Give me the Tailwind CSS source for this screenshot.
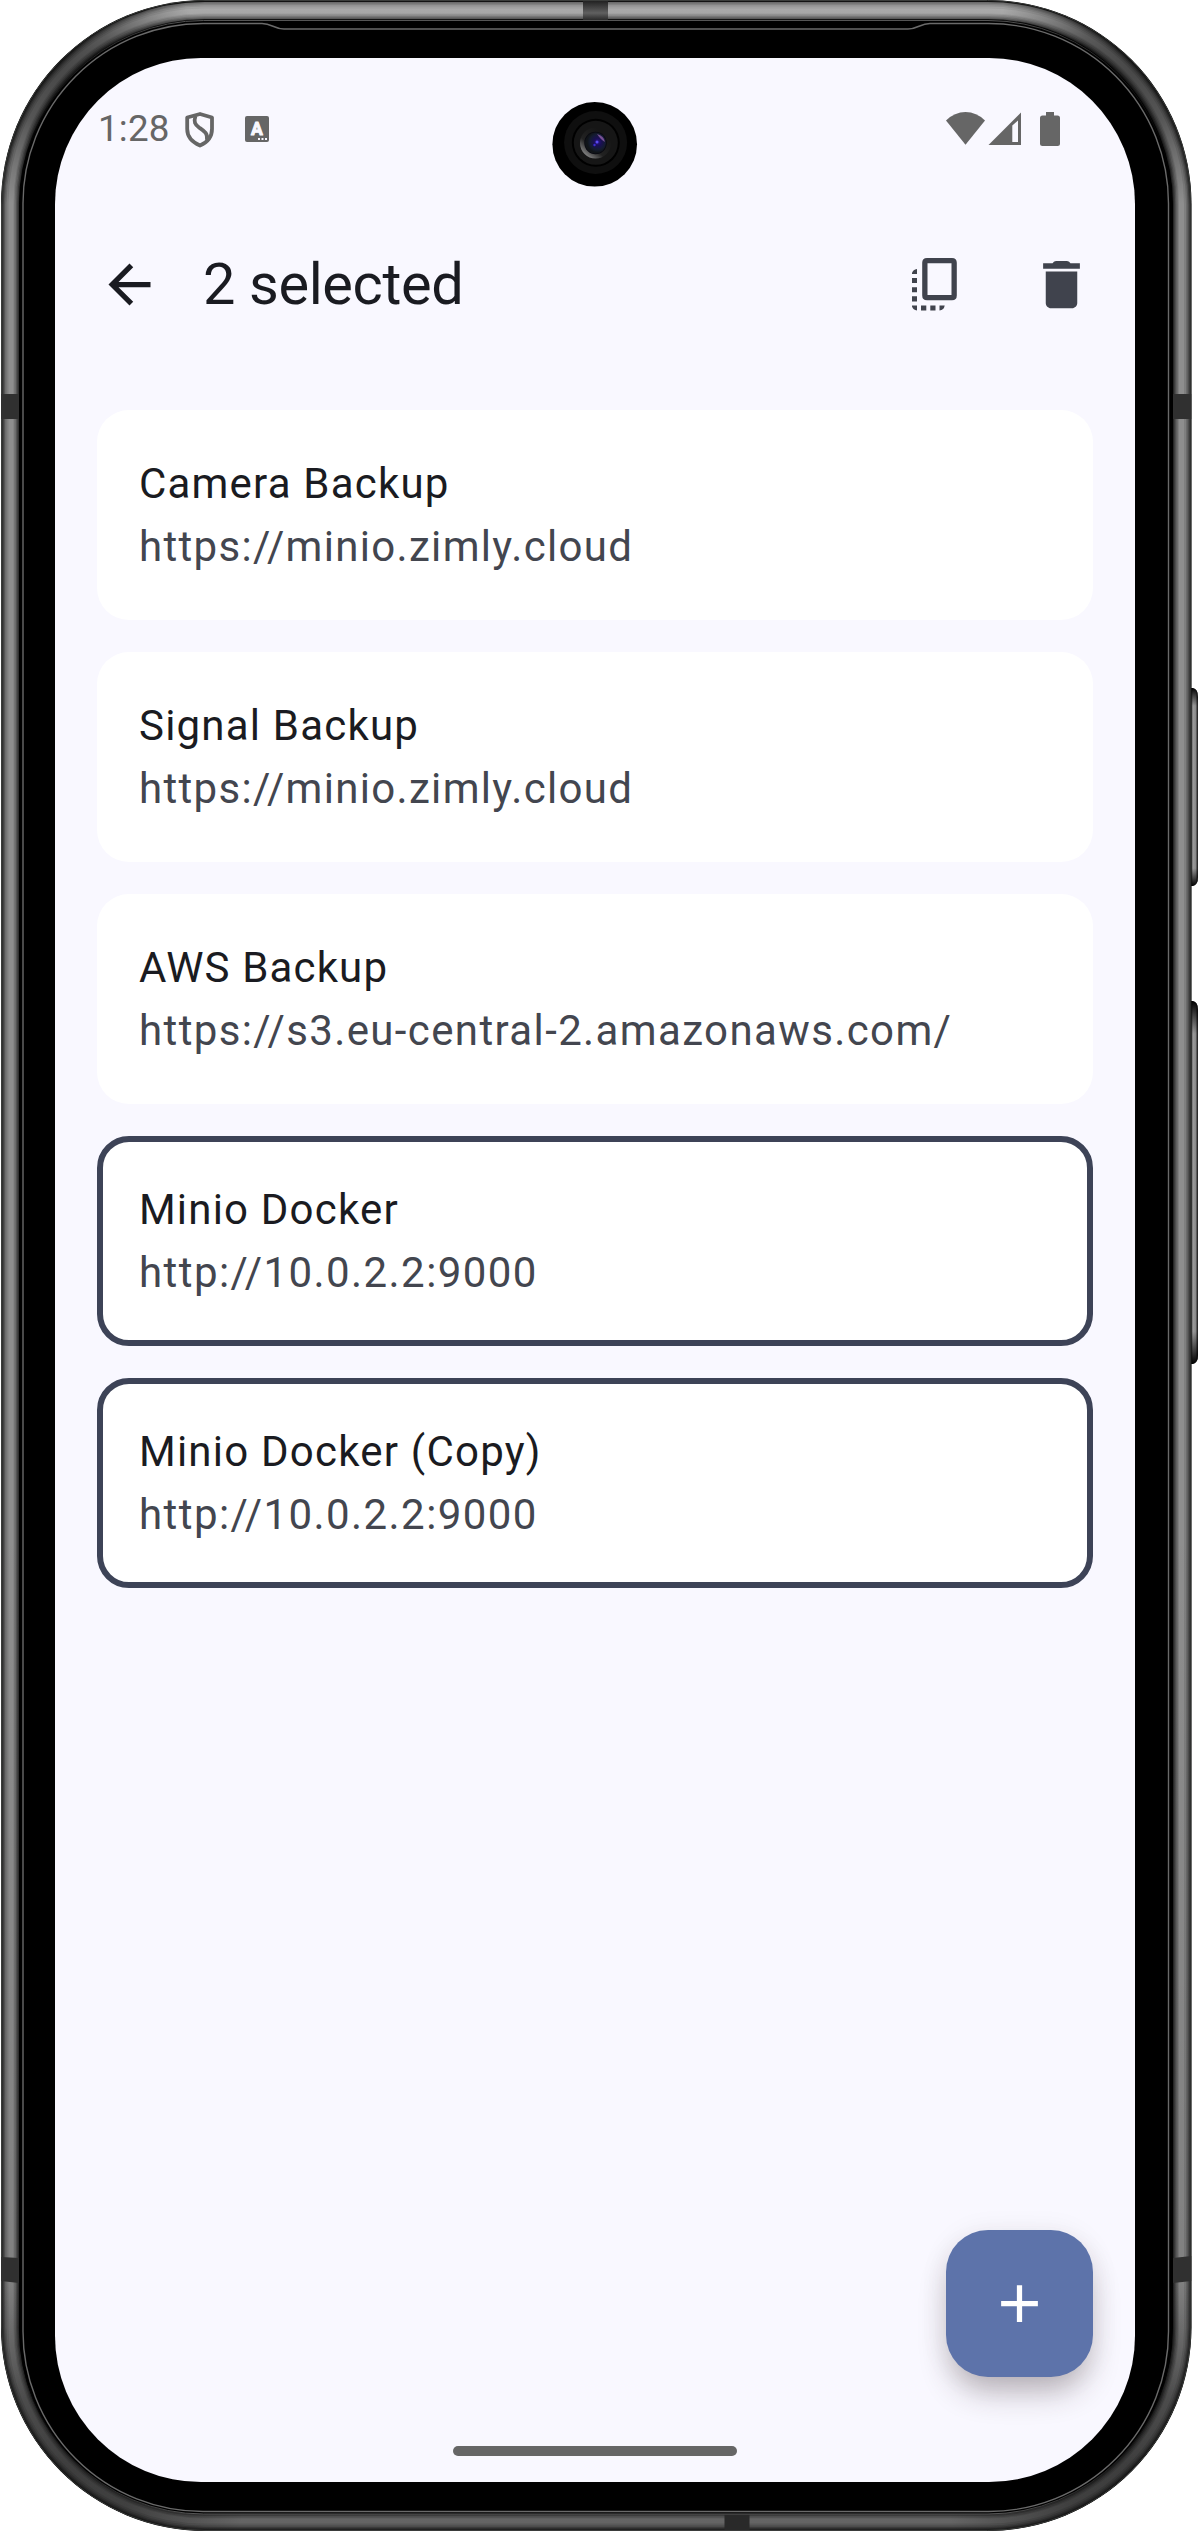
<!DOCTYPE html>
<html lang="en">
<head>
<meta charset="utf-8">
<title>2 selected</title>
<script src="https://cdn.jsdelivr.net/npm/@tailwindcss/browser@4"></script>
</head>
<body class="bg-white">
<div class="relative h-[2531px] w-[1198px] overflow-hidden pl-[55px] pt-[58px] font-['Roboto',sans-serif]">

  <!-- phone body -->
  <svg class="absolute left-0 top-0" width="1198" height="2531" viewBox="0 0 1198 2531" fill="none">
    <defs>
      <linearGradient id="light" x1="0" y1="0" x2="0" y2="2531" gradientUnits="userSpaceOnUse">
        <stop offset="0" stop-color="#fff" stop-opacity=".3"/>
        <stop offset=".02" stop-color="#fff" stop-opacity="0"/>
        <stop offset=".6" stop-color="#000" stop-opacity="0"/>
        <stop offset=".97" stop-color="#000" stop-opacity=".12"/>
        <stop offset="1" stop-color="#000" stop-opacity=".32"/>
      </linearGradient>
      <radialGradient id="shade">
        <stop offset="0" stop-color="#000" stop-opacity=".5"/>
        <stop offset=".4" stop-color="#000" stop-opacity=".4"/>
        <stop offset="1" stop-color="#000" stop-opacity="0"/>
      </radialGradient>
      <linearGradient id="seam" x1="20" y1="0" x2="1172" y2="0" gradientUnits="userSpaceOnUse">
        <stop offset="0" stop-color="#000"/><stop offset=".15" stop-color="#555"/><stop offset=".85" stop-color="#555"/><stop offset="1" stop-color="#000"/>
      </linearGradient>
      <linearGradient id="button" x1="1191" y1="0" x2="1198" y2="0" gradientUnits="userSpaceOnUse">
        <stop offset="0" stop-color="#555"/><stop offset=".35" stop-color="#999"/><stop offset=".65" stop-color="#8a8a8a"/><stop offset="1" stop-color="#111"/>
      </linearGradient>
      <linearGradient id="buttonEnds" x1="0" y1="0" x2="0" y2="1">
        <stop offset="0" stop-color="#000"/><stop offset=".09" stop-color="#000" stop-opacity="0"/><stop offset=".91" stop-color="#000" stop-opacity="0"/><stop offset="1" stop-color="#000"/>
      </linearGradient>
      <linearGradient id="bandTop" x1="0" y1="0" x2="0" y2="1"><stop offset="0" stop-color="#222"/><stop offset=".6" stop-color="#606060"/><stop offset="1" stop-color="#222"/></linearGradient>
      <clipPath id="body"><rect x="1" y="0" width="1190.5" height="2531" rx="204"/></clipPath>
      <radialGradient id="lens" cx=".6" cy=".45"><stop offset="0" stop-color="#2c1690"/><stop offset=".35" stop-color="#1a0f55"/><stop offset=".75" stop-color="#141c30"/><stop offset="1" stop-color="#101418"/></radialGradient>
      <linearGradient id="rim" x1=".15" y1=".9" x2=".75" y2=".2"><stop offset="0" stop-color="#888"/><stop offset=".4" stop-color="#222"/><stop offset="1" stop-color="#161616"/></linearGradient>
    </defs>
    <path d="M1191 688h2q5 1 5 9v180q0 8-5 9h-2zM1191 1001h2q5 1 5 9v345q0 8-5 9h-2z" fill="url(#button)"/>
    <path d="M1191 688h2q5 1 5 9v180q0 8-5 9h-2z" fill="url(#buttonEnds)"/>
    <path d="M1191 1001h2q5 1 5 9v345q0 8-5 9h-2z" fill="url(#buttonEnds)"/>
    <rect x="1" y="0" width="1190.5" height="2531" rx="204" fill="#000"/>
    <g clip-path="url(#body)">
      <rect x="10.5" y="10.5" width="1171.5" height="2511" rx="194" stroke="#262626" stroke-width="18"/>
      <rect x="10.5" y="10.5" width="1171.5" height="2511" rx="194" stroke="#3c3c3c" stroke-width="16"/>
      <rect x="10.5" y="10.5" width="1171.5" height="2511" rx="194" stroke="#555" stroke-width="13.5"/>
      <rect x="10.5" y="10.5" width="1171.5" height="2511" rx="194" stroke="#6c6c6c" stroke-width="11"/>
      <rect x="10.5" y="10.5" width="1171.5" height="2511" rx="194" stroke="#7f7f7f" stroke-width="8"/>
      <rect x="11" y="11" width="1170.5" height="2510" rx="193" stroke="#8e8e8e" stroke-width="5"/>
      <rect x="10.5" y="10.5" width="1171.5" height="2511" rx="194" stroke="url(#light)" stroke-width="17"/>
      <circle cx="55" cy="65" r="145" fill="url(#shade)"/>
      <circle cx="1137" cy="65" r="145" fill="url(#shade)"/>
      <circle cx="60" cy="2466" r="190" fill="url(#shade)"/>
      <circle cx="1132" cy="2466" r="190" fill="url(#shade)"/>
      <rect x="1.5" y=".5" width="1189.5" height="2530" rx="203.5" stroke="#3b3d3b"/>
      <path d="M1 394h18v25H1zM1173 394h18.500v25H1173zM1 2257l18 1v25l-18-2zM1173 2258l18.500-2v25l-18.500 2z" fill="#303030"/>
      <rect x="583" y="1" width="25" height="20" fill="url(#bandTop)"/>
      <rect x="724.500" y="2514" width="25" height="16" fill="#292929"/>
    </g>
    <rect x="19.500" y="20.500" width="1152.500" height="2493.500" rx="184" fill="#000" stroke="url(#seam)"/>
    <path d="M203 23.500H262C272 23.500 274 29 284 29H908C918 29 920 23.500 930 23.500H988.500A180 180 0 0 1 1168.500 203.500V2331.500A180 180 0 0 1 988.500 2511.500H203A180 180 0 0 1 23 2331.500V203.500A180 180 0 0 1 203 23.500Z" fill="#000" stroke="#6a6a6a" stroke-width="1.400"/>
  </svg>

  <!-- screen -->
  <div class="relative flex h-[2424px] w-[1080px] flex-col overflow-hidden rounded-[146px] bg-[#f9f8ff]">
    <div class="flex h-[142px] shrink-0 items-start justify-between pl-[43px] pr-[75px] pt-[52px]">
      <div class="flex items-start text-[#666]">
        <span class="w-[84px] text-[36.750px] leading-[37px] tracking-[0.2px]">1:28</span>
        <svg class="ml-[2px] mt-[2px]" width="30" height="36" viewBox="0 0 30 36" fill="none" stroke="#666" stroke-width="3.800" stroke-linejoin="round">
          <path d="M16 2 28 5.500V17C28 25 23 30.500 16 33.500 9 30.500 3.200 25 3.200 17V5.500Z"/>
          <path d="M11.500 4C9.500 10 11 12.500 15 15.500 20 19 24 21 23 28"/>
        </svg>
        <svg class="ml-[31px] mt-[6px]" width="24" height="26" viewBox="0 0 24 26">
          <rect width="24" height="26" rx="2" fill="#666"/>
          <text x="12" y="18.700" text-anchor="middle" font-family="Roboto" font-size="17.500" font-weight="700" fill="#f9f8ff" stroke="#f9f8ff" stroke-width="1" stroke-linejoin="round">A</text>
          <path d="M13 22h2v2h-2zM16.500 22h2v2h-2zM20 22h2v2h-2z" fill="#f9f8ff"/>
        </svg>
      </div>
      <svg class="mt-[2px]" width="116" height="36" viewBox="944 112 116 36" fill="#666">
        <path d="M965.500 144.800 946 120.500Q954.500 112 965.500 112T985 120.500Z"/>
        <path fill-rule="evenodd" d="M988.500 145 1021 112.500V145ZM1012.300 125.500V142H1018V120.500Z"/>
        <path d="M1046 112h8v3.500h3.500q2.500 0 2.500 2.500v25.500q0 2.500-2.500 2.500h-15q-2.500 0-2.500-2.500v-25.500q0-2.500 2.500-2.500h3.500z"/>
      </svg>
    </div>

    <header class="flex h-[168px] shrink-0 items-center pl-[43px] pr-[42px]">
      <svg width="63" height="63" viewBox="0 0 24 24" fill="#1a1b21"><path d="M20 11H7.830l5.590-5.590L12 4l-8 8 8 8 1.410-1.410L7.830 13H20v-2z"/></svg>
      <h1 class="ml-[42px] flex-1 text-[57.750px] leading-[74px] tracking-[-0.38px] text-[#1a1b21]">2 selected</h1>
      <svg class="mr-[63px]" width="63" height="63" viewBox="904 253 63 63" fill="#40434d">
        <path fill-rule="evenodd" d="M927 258h25q4.800 0 4.800 4.800v32.700q0 4.800-4.800 4.800h-25q-4.800 0-4.800-4.800v-32.700q0-4.800 4.800-4.800zM927.500 263.200v31.800h24v-31.800z"/>
        <path d="M912 274v-1q1-3.500 5-4v5zM912 278h5v5h-5zM912 287.200h5v5h-5zM912 296.200h5v5.300h-5zM912 305.500h5v5q-4-.5-5-4zM921 305.500h5.300v5.100H921zM930.300 305.500h5.200v5.100h-5.200zM939.500 305.500h5.200q-.7 4.500-5.200 5.100z"/>
      </svg>
      <svg width="63" height="63" viewBox="0 0 24 24" fill="#40434d"><path d="M6 19c0 1.100.9 2 2 2h8c1.100 0 2-.9 2-2V7H6zM19 3.900h-3.600l-.5-.6Q14.500 3 14 3h-4q-.5 0-.9.300l-.5.6H5V6h14z"/></svg>
    </header>

    <main class="flex flex-col gap-[32px] px-[42px] pt-[42px] text-[42px] leading-[63px] tracking-[1.3125px] text-[#43464f]">
      <section class="h-[210px] rounded-[32px] bg-white p-[42px]">
        <h2 class="tracking-[1.2px] text-[#1a1b21]">Camera Backup</h2>
        <p>https://minio.zimly.cloud</p>
      </section>
      <section class="h-[210px] rounded-[32px] bg-white p-[42px]">
        <h2 class="tracking-[1.2px] text-[#1a1b21]">Signal Backup</h2>
        <p>https://minio.zimly.cloud</p>
      </section>
      <section class="h-[210px] rounded-[32px] bg-white p-[42px]">
        <h2 class="tracking-[1.15px] text-[#1a1b21]">AWS Backup</h2>
        <p class="tracking-[1.38px]">https://s3.eu-central-2.amazonaws.com/</p>
      </section>
      <section class="h-[210px] rounded-[32px] border-[6px] border-[#3d4357] bg-white p-[36px]">
        <h2 class="tracking-[1.2px] text-[#1a1b21]">Minio Docker</h2>
        <p class="tracking-[1.43px]">http://10.0.2.2:9000</p>
      </section>
      <section class="h-[210px] rounded-[32px] border-[6px] border-[#3d4357] bg-white p-[36px]">
        <h2 class="tracking-[1.22px] text-[#1a1b21]">Minio Docker (Copy)</h2>
        <p class="tracking-[1.43px]">http://10.0.2.2:9000</p>
      </section>
    </main>

    <div class="mb-[69px] mr-[42px] mt-auto flex size-[147px] items-center justify-center self-end rounded-[42px] bg-[#5d73aa] shadow-[0_20px_32px_-6px_rgba(50,35,40,0.32),0_3px_28px_rgba(50,35,40,0.08)]">
      <svg width="63" height="63" viewBox="0 0 24 24" fill="#fff"><path d="M19 13h-6v6h-2v-6H5v-2h6V5h2v6h6z"/></svg>
    </div>
    <div class="mb-[26px] h-[10px] w-[284px] shrink-0 self-center rounded-full bg-[#666]"></div>
  </div>

  <!-- front camera -->
  <svg class="absolute left-[552px] top-[102px]" width="86" height="86" viewBox="552 102 86 86">
    <circle cx="594.700" cy="144.300" r="42.300" fill="#000"/>
    <circle cx="595.600" cy="142.500" r="31.500" fill="#0f0f0f"/>
    <circle cx="595.800" cy="142.800" r="24" fill="#000"/>
    <circle cx="595.800" cy="142.800" r="22" fill="#161616"/>
    <circle cx="595.500" cy="143" r="15.500" fill="url(#rim)"/>
    <circle cx="595.500" cy="143" r="11.200" fill="#080810"/>
    <circle cx="595.500" cy="143" r="10.500" fill="url(#lens)"/>
    <path d="M597 134q7 2 8 8-4-2-8-8z" fill="#a06ab8" opacity=".7"/>
    <circle cx="597" cy="142" r="1.500" fill="#5a4af0"/>
    <circle cx="594.500" cy="145" r="1.200" fill="#3a2bd0"/>
  </svg>
</div>
</body>
</html>
